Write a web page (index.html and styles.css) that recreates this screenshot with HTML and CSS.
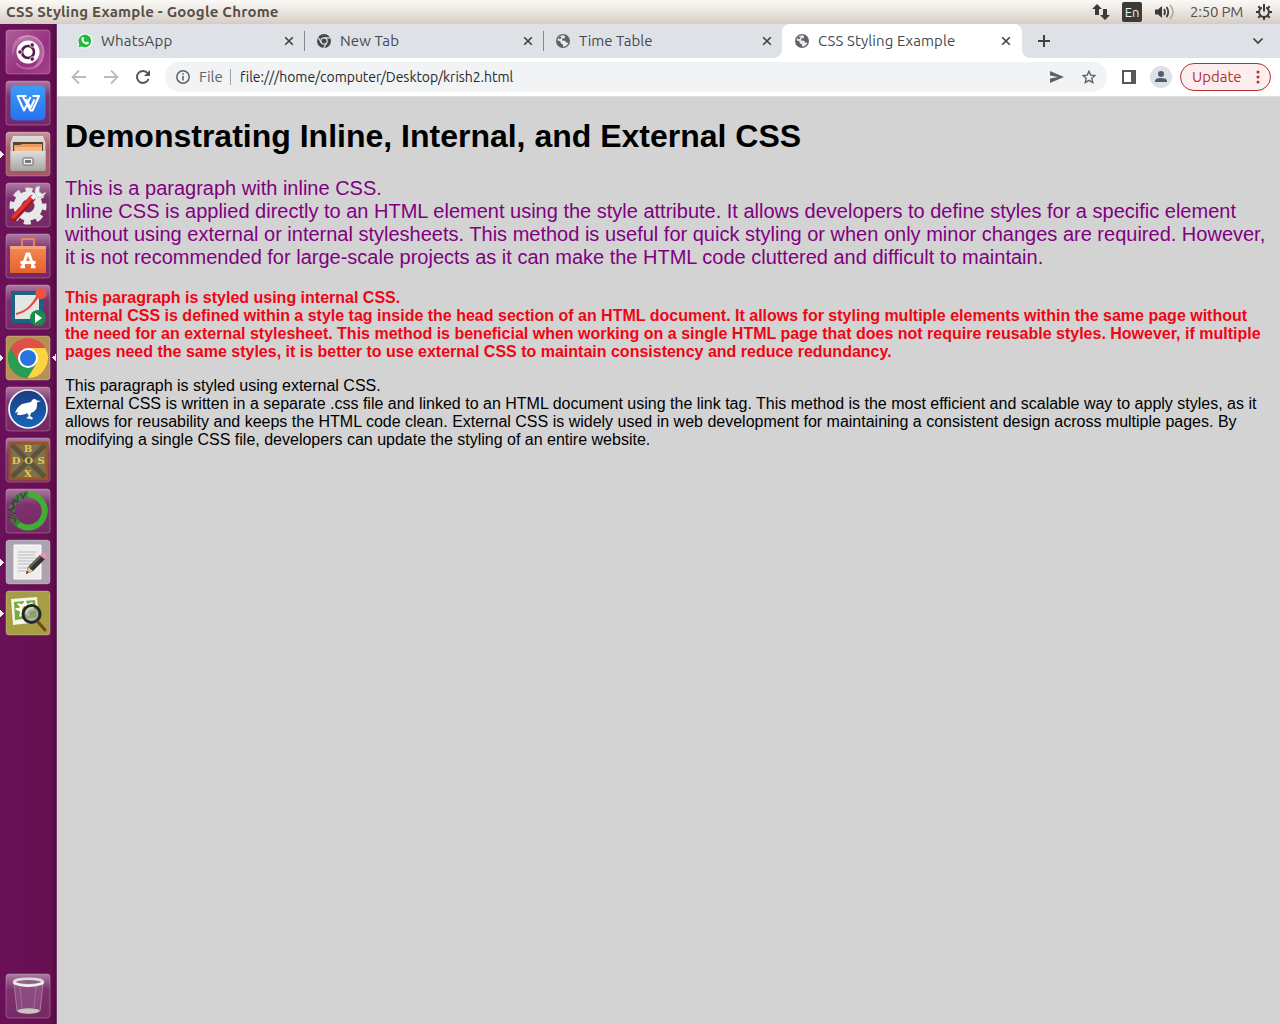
FILE: index.html
```html
<!DOCTYPE html>
<html lang="en">
<head>
<meta charset="utf-8">
<title>CSS Styling Example</title>
<link rel="stylesheet" href="styles.css">
</head>
<body>
<svg class="defs" width="0" height="0" aria-hidden="true">
  <defs>
    <linearGradient id="tile" x1="0" y1="0" x2="0" y2="1"><stop offset="0" stop-color="#fff" stop-opacity=".45"/><stop offset=".35" stop-color="#fff" stop-opacity=".14"/><stop offset="1" stop-color="#fff" stop-opacity=".1"/></linearGradient>
    <linearGradient id="ubuntu" x1="0" y1="0" x2="1" y2="1"><stop offset="0" stop-color="#ad6098"/><stop offset=".6" stop-color="#983080"/><stop offset="1" stop-color="#a7408e"/></linearGradient>
    <linearGradient id="blue" x1="0" y1="0" x2="0" y2="1"><stop offset="0" stop-color="#1c3c82"/><stop offset="1" stop-color="#1765bc"/></linearGradient>
    <linearGradient id="wps" x1="0" y1="0" x2="0" y2="1"><stop offset="0" stop-color="#3d9df5"/><stop offset="1" stop-color="#2671f0"/></linearGradient>
    <linearGradient id="metal" x1="0" y1="0" x2="0" y2="1"><stop offset="0" stop-color="#dedede"/><stop offset="1" stop-color="#a6a6a3"/></linearGradient>
    <linearGradient id="bag" x1="0" y1="0" x2="0" y2="1"><stop offset="0" stop-color="#f18a58"/><stop offset="1" stop-color="#e8622a"/></linearGradient>
    <symbol id="globe" viewBox="0 0 14 14"><circle cx="7" cy="7" r="7" fill="#5f6368"/><path d="M8 1.4 9.2 2.5 8.6 4.2 6.3 4.6 6 6.4 9.2 6.8 10.2 8.8 12.4 8.6A5.8 5.8 0 0 1 7 12.7L7 10.6 4.8 9.2 4.5 7.5 1.4 6.3A5.8 5.8 0 0 1 8 1.4Z" fill="#e9ebee"/><path d="M3.2 3.2 5.6 2.4 5 4.8 2.5 5.3Z" fill="#5f6368"/></symbol>
    <symbol id="close" viewBox="0 0 10 10"><path d="M1.2 1.2 8.8 8.8M8.8 1.2 1.2 8.8" stroke="#3c4043" stroke-width="1.6"/></symbol>
  </defs>
</svg>
<header class="panel">
  <span class="window-title">CSS Styling Example - Google Chrome</span>
  <svg class="net" width="18" height="16" viewBox="0 0 18 16" fill="#3c3b37"><path d="M5 0 10 5H7V11H3V5H0ZM13 16 8 11H11V5H15V11H18Z"/></svg>
  <span class="lang">En</span>
  <svg class="volume" width="20" height="16" viewBox="0 0 20 16" fill="none"><path d="M0 5.5H3L7 2V14L3 10.5H0Z" fill="#3c3b37"/><path d="M9 5Q11 8 9 11M11.500 3Q15 8 11.500 13" stroke="#3c3b37" stroke-width="1.8"/><path d="M15 1Q21 8 15 15" stroke="#b0aaa3" stroke-width="1.6"/></svg>
  <span class="clock">2:50 PM</span>
  <svg class="gear" width="16" height="16" viewBox="0 0 16 16" fill="none" stroke="#3c3b37"><path d="M5.8 3.6A5 5 0 1 0 10.2 3.6" stroke-width="2"/><path d="M8 0V7.5M0 8H3M13 8H16M8 13V16M2.3 2.3 4.3 4.3M13.7 2.3 11.7 4.3M2.3 13.7 4.3 11.7M13.7 13.7 11.7 11.7" stroke-width="2"/></svg>
</header>
<div class="desktop">
  <nav class="launcher">
    <svg class="app" viewBox="0 0 44 44"><rect class="base" width="44" height="44" rx="3" fill="url(#ubuntu)"/><path d="M7 26C3 10 16 1 29 7 42 13 40 33 28 38 35 29 34 15 23 11 13 9 8 17 7 26Z" fill="#fff" opacity=".22"/><path d="M13 9C26 0 41 12 37 27 34 40 17 42 10 33" fill="none" stroke="#fff" stroke-width="2" opacity=".25"/><circle cx="22" cy="22" r="11.500" fill="#fff"/><circle cx="22" cy="22" r="6" fill="none" stroke="#56194c" stroke-width="2.6"/><g fill="#56194c" stroke="#fff" stroke-width=".8"><circle cx="14" cy="22" r="2.2"/><circle cx="26.2" cy="15" r="2.2"/><circle cx="26.2" cy="29" r="2.2"/></g></svg>
    <svg class="app" viewBox="0 0 44 44"><rect class="base" width="44" height="44" rx="3" fill="url(#tile)"/><rect x="4.500" y="4.500" width="35" height="35" rx="5" fill="url(#wps)"/><path d="M20.500 15H11.500L18 29.500 24.500 16M16.500 15 24.500 29.500H26.500L33 15H26.500M20 18 24.500 27 28.500 18.500" fill="none" stroke="#fff" stroke-width="2" stroke-linejoin="round"/></svg>
    <svg class="app running" viewBox="0 0 44 44"><rect class="base" width="44" height="44" rx="3" fill="#9b4552"/><rect width="44" height="44" rx="3" fill="url(#tile)"/><path d="M7 4H37L39.500 11V37Q39.500 39 38 39H6Q4.500 39 4.500 37V11Z" fill="url(#metal)"/><path d="M7 10H37V19H7Z" fill="#574334"/><path d="M8 13H14L16 12H36V19H8Z" fill="#e99b60"/><path d="M9 15H36V19H9Z" fill="#f3ba83"/><path d="M4.500 19H39.500V37Q39.500 39 38 39H6Q4.500 39 4.500 37Z" fill="url(#metal)"/><rect x="17" y="26" width="10" height="7" rx="1" fill="#f2f2f2" stroke="#666"/><rect x="19" y="28" width="6" height="3" fill="#777"/></svg>
    <svg class="app" viewBox="0 0 44 44"><rect class="base" width="44" height="44" rx="3" fill="url(#tile)"/><circle cx="22" cy="23" r="16" fill="none" stroke="#e5e5e5" stroke-width="5" stroke-dasharray="7 5.566" stroke-dashoffset="3"/><circle cx="22" cy="23" r="10.500" fill="none" stroke="#e9e9e9" stroke-width="8"/><path d="M8 35 26 15.500" stroke="#a91418" stroke-width="6.500" stroke-linecap="round"/><path d="M7.500 34 25.500 14.500" stroke="#df3439" stroke-width="4" stroke-linecap="round"/><path d="M26 15.500 33 9" stroke="#efefef" stroke-width="4"/><path d="M30 4Q27 11 32 14 38 15 40 9L36 11 33 9 34 3Z" fill="#f2f2f2" stroke="#aaa" stroke-width=".6"/></svg>
    <svg class="app" viewBox="0 0 44 44"><rect class="base" width="44" height="44" rx="3" fill="url(#tile)"/><path d="M16 13V5H28V13" fill="none" stroke="#e98257" stroke-width="2"/><path d="M4 12H40V39H4Z" fill="url(#bag)"/><path d="M4 12H40V15H4Z" fill="#f6a37d"/><path d="M16.500 33 21 20H23L27.500 33M14.500 28.500H29.500" fill="none" stroke="#fff" stroke-width="3"/><path d="M14.500 33H19M25 33H29.500" stroke="#fff" stroke-width="2.5"/></svg>
    <svg class="app" viewBox="0 0 44 44"><rect class="base" width="44" height="44" rx="3" fill="url(#tile)"/><rect x="7" y="8" width="28" height="28" fill="#e0e7e4" stroke="#1e6284" stroke-width="4"/><path d="M10 30Q24 27 34 10L31 9Q24 25 10 28Z" fill="#e64837"/><circle cx="35" cy="8.500" r="5.500" fill="#f05240"/><circle cx="32" cy="33" r="8" fill="#198b4c"/><path d="M29 28 36 33 29 38Z" fill="#fff"/></svg>
    <svg class="app running active" viewBox="0 0 44 44"><rect class="base" width="44" height="44" rx="3" fill="#b69155"/><circle cx="22" cy="22" r="20" fill="#df5146"/><path d="M22 12H39.300A20 20 0 0 1 21 42L30.700 27Z" fill="#fcd342"/><path d="M4.700 12A20 20 0 0 0 21.500 42L30.700 27H22L13.300 27Z" fill="#279e54"/><circle cx="22" cy="22" r="10" fill="#fff"/><circle cx="22" cy="22" r="8" fill="#2675df"/></svg>
    <svg class="app" viewBox="0 0 44 44"><rect class="base" width="44" height="44" rx="3" fill="url(#tile)"/><circle cx="22" cy="22" r="19" fill="url(#blue)" stroke="#f3f5f7" stroke-width="1.7"/><path d="M35 14 31 13.500Q27 10 25 15L16 17Q11 20 9 26L12 25 11 28Q19 28 21 26L23 29 20 31 26 32.500 27 31 24 29 25 26Q31 24 31 18L31 15.500Z" fill="#fff"/></svg>
    <svg class="app" viewBox="0 0 44 44"><rect class="base" width="44" height="44" rx="3" fill="url(#tile)"/><rect x="4" y="5" width="37" height="36" fill="#80704d" stroke="#9a5524" stroke-width="3"/><path d="M6 7 39 39M39 7 6 39" stroke="#5d533e" stroke-width="5"/><g class="dos" fill="#e7c54b" text-anchor="middle"><text x="22" y="13.500">B</text><text x="10" y="26">D</text><text x="22.500" y="26">O</text><text x="35" y="26">S</text><text x="22" y="38.500">X</text></g></svg>
    <svg class="app" viewBox="0 0 44 44"><rect class="base" width="44" height="44" rx="3" fill="url(#tile)"/><path d="M22 5.500A16.500 16.500 0 1 1 12 35" fill="none" stroke="#42ad35" stroke-width="6"/><path d="M22 5.500A16.500 16.500 0 0 0 12 35" fill="none" stroke="#35823a" stroke-width="6.500"/><path d="M20 3 17 9M14 4 18 10M12 6 11 13 7 10M13 12 5 14 9 18 2 21 9 24 3 28 10 30 8 34M7 11 8 19 3 25 10 28" fill="none" stroke="#701b58" stroke-width="1.1"/></svg>
    <svg class="app running" viewBox="0 0 44 44"><rect class="base" width="44" height="44" rx="3" fill="#aca2b0"/><path d="M8 5H35V39H8Z" fill="#eee" stroke="#fff"/><path d="M12 12H31M12 15H29M12 18H31M12 21H28M12 24H30M12 28H24M12 31H26" stroke="#bbb" stroke-width="1"/><path d="M20 34 22 27 34 15 39 19 27 31Z" fill="#32342f"/><path d="M23 28 35 16" stroke="#70736a" stroke-width="1.5"/><path d="M34 15 37 12 41 16 38 19Z" fill="#ed91ac"/><path d="M20 34 22 27 27 31Z" fill="#e7c488"/><path d="M20 34 21 31 23 32Z" fill="#222"/></svg>
    <svg class="app running" viewBox="0 0 44 44"><rect class="base" width="44" height="44" rx="3" fill="#a69e45"/><path d="M5 8 31 6 33 31 7 34Z" fill="#f4f4e9"/><path d="M8 11 29 9 31 26 9 29Z" fill="#7ba839"/><path d="M10 18 16 17 12 13 17 14 19 10 21 14 26 12 23 17 28 19 22 20 23 25 19 22 14 25 15 20Z" fill="#fff" stroke="#fff" stroke-width="1.5" stroke-linejoin="round"/><circle cx="19" cy="18" r="3" fill="#e1bd35"/><circle cx="25.500" cy="23" r="8.500" fill="#929e82" fill-opacity=".75" stroke="#222822" stroke-width="3"/><path d="M20 22Q22 16 28 17" fill="none" stroke="#d9ddd0" stroke-width="1.5"/><path d="M32 31 39 39" stroke="#74451c" stroke-width="3" stroke-linecap="round"/></svg>
    <svg class="app trash" viewBox="0 0 44 44"><rect class="base" width="44" height="44" rx="3" fill="url(#tile)"/><path d="M8 9 11 37Q22 41 34 37L37 9" fill="#a16b9a" fill-opacity=".45" stroke="#a87aa3"/><path d="M14 12 16 34M30 12 28 34" stroke="#b891b4" stroke-width=".5"/><ellipse cx="22.500" cy="8" rx="14.500" ry="3.200" fill="#8e6387" stroke="#deded9" stroke-width="2.5"/><path d="M8 9Q22 15 37 9" fill="none" stroke="#f3f3ed" stroke-width="2"/><ellipse cx="22.500" cy="37" rx="11" ry="2.700" fill="#c7c6bd"/></svg>
  </nav>
  <main class="browser">
    <div class="tabs">
      <div class="tab"><svg class="favicon chat" viewBox="0 0 16 16"><path d="M.5 15.500 1.500 11.500A7.400 7.400 0 1 1 4.500 14.500Z" fill="#fff"/><path d="M1.500 14.500 2.300 11.200A6.400 6.400 0 1 1 4.800 13.600Z" fill="#25b941"/><path d="M5 4.200 6.400 4 7.200 6 6.400 7Q7.300 8.800 9 9.500L10 8.500 12 9.600Q11.500 12 9 11.500 4.800 10 4.400 6Z" fill="#fff"/></svg><span class="label whatsapp">WhatsApp</span><svg class="close"><use href="#close"/></svg></div>
      <div class="tab"><svg class="favicon" viewBox="0 0 14 14"><circle cx="7" cy="7" r="7" fill="#45494d"/><circle cx="7" cy="7" r="3.200" fill="none" stroke="#dee1e6" stroke-width="1.2"/><path d="M7 3.800H13.200M4.200 8.600 1.100 3.500M9.800 8.600 6.700 13.900" stroke="#dee1e6" stroke-width="1.2"/></svg><span class="label newtab">New Tab</span><svg class="close"><use href="#close"/></svg></div>
      <div class="tab"><svg class="favicon"><use href="#globe"/></svg><span class="label">Time Table</span><svg class="close"><use href="#close"/></svg></div>
      <div class="tab selected"><svg class="favicon"><use href="#globe"/></svg><span class="label example">CSS Styling Example</span><svg class="close"><use href="#close"/></svg></div>
      <svg class="new" width="14" height="14" viewBox="0 0 14 14"><path d="M7 1V13M1 7H13" stroke="#3c4043" stroke-width="2"/></svg>
      <svg class="chevron" width="12" height="10" viewBox="0 0 12 10"><path d="M1.500 2.500 6 7 10.500 2.500" fill="none" stroke="#3c4043" stroke-width="1.7"/></svg>
    </div>
    <div class="toolbar">
      <svg class="back" width="16" height="16" viewBox="0 0 16 16"><path d="M15 8H2M8 1.500 1.500 8 8 14.500" fill="none" stroke="#b8babd" stroke-width="1.8"/></svg>
      <svg class="forward" width="16" height="16" viewBox="0 0 16 16"><path d="M1 8H14M8 1.500 14.500 8 8 14.500" fill="none" stroke="#b8babd" stroke-width="1.8"/></svg>
      <svg class="reload" width="16" height="16" viewBox="0 0 16 16"><path d="M13.600 10A6 6 0 1 1 12.700 4.200" fill="none" stroke="#54575b" stroke-width="2"/><path d="M15 1V7H9Z" fill="#54575b"/></svg>
      <div class="address">
        <svg width="14" height="14" viewBox="0 0 14 14"><circle cx="7" cy="7" r="6.200" fill="none" stroke="#5f6368" stroke-width="1.5"/><path d="M7 6V10.500M7 3.200V4.800" stroke="#5f6368" stroke-width="1.6"/></svg>
        <span class="scheme">File</span><span class="url">file:///home/computer/Desktop/krish2.html</span>
        <svg class="send" width="14" height="12" viewBox="0 0 14 12"><path d="M0 0 14 6 0 12V7.500L8 6 0 4.500Z" fill="#5f6368"/></svg>
        <svg class="star" width="14" height="14" viewBox="0 0 14 14"><path d="M7 1.200 8.700 5.100 13 5.500 9.800 8.300 10.700 12.500 7 10.300 3.300 12.500 4.200 8.300 1 5.500 5.300 5.100Z" fill="none" stroke="#5f6368" stroke-width="1.4"/></svg>
      </div>
      <svg class="side" width="14" height="14" viewBox="0 0 14 14"><path d="M0 0H14V14H0ZM2 2V12H9V2Z" fill="#55585d" fill-rule="evenodd"/></svg>
      <svg class="profile" width="22" height="22" viewBox="0 0 22 22"><circle cx="11" cy="11" r="11" fill="#dce0e7"/><circle cx="11" cy="8" r="3" fill="#505b70"/><path d="M5 16V15Q5 12 11 12T17 15V16Z" fill="#505b70"/></svg>
      <div class="update"><span>Update</span><svg width="4" height="14" viewBox="0 0 4 14" fill="#b3302e"><circle cx="2" cy="2" r="1.500"/><circle cx="2" cy="7" r="1.500"/><circle cx="2" cy="12" r="1.500"/></svg></div>
    </div>
    <article class="page">
      <h1>Demonstrating Inline, Internal, and External CSS</h1>
      <p class="inline-copy">This is a paragraph with inline CSS.<br>Inline CSS is applied directly to an HTML element using the style attribute. It allows developers to define styles for a specific element without using external or internal stylesheets. This method is useful for quick styling or when only minor changes are required. However, it is not recommended for large-scale projects as it can make the HTML code cluttered and difficult to maintain.</p>
      <p class="internal-copy">This paragraph is styled using internal CSS.<br>Internal CSS is defined within a style tag inside the head section of an HTML document. It allows for styling multiple elements within the same page without the need for an external stylesheet. This method is beneficial when working on a single HTML page that does not require reusable styles. However, if multiple pages need the same styles, it is better to use external CSS to maintain consistency and reduce redundancy.</p>
      <p>This paragraph is styled using external CSS.<br>External CSS is written in a separate .css file and linked to an HTML document using the link tag. This method is the most efficient and scalable way to apply styles, as it allows for reusability and keeps the HTML code clean. External CSS is widely used in web development for maintaining a consistent design across multiple pages. By modifying a single CSS file, developers can update the styling of an entire website.</p>
    </article>
  </main>
</div>
</body>
</html>
```
FILE: styles.css
```css
* { box-sizing: border-box; }
body { margin: 0; width: 1280px; height: 1024px; overflow: hidden; display: flex; flex-direction: column; font-family: Ubuntu, "Noto Sans", sans-serif; }
svg { display: block; flex: none; }
.defs { position: absolute; }
.panel { height: 24px; flex: none; display: flex; align-items: center; padding: 0 8px 0 6px; background: linear-gradient(#faf9f6, #f2eeea 30%, #d6ccc4); color: #55504a; white-space: nowrap; }
.window-title { font-size: 15px; line-height: 16px; padding-bottom: 1px; font-weight: 700; margin-right: auto; letter-spacing: .23px; }
.net { margin-right: 12px; }
.lang { width: 20px; height: 20px; border-radius: 2px; background: #3c3b37; color: #eee; font-size: 13px; line-height: 20px; text-align: center; margin-right: 13px; }
.volume { margin-right: 15px; }
.clock { font-size: 15px; line-height: 16px; padding-bottom: 1px; letter-spacing: -.2px; width: 53px; margin-right: 13px; }
.desktop { display: flex; flex: 1; min-height: 0; }
.launcher { width: 57px; flex: none; display: flex; flex-direction: column; gap: 7px; padding: 6px 0 6px 6px; background: linear-gradient(90deg, #6a1059, #661052 90%, #530b43); border-right: 1px solid #753668; }
.app { width: 44px; height: 44px; overflow: visible; }
.app .base { stroke: #fff; stroke-opacity: .25; stroke-width: 1; }
.trash { margin-top: auto; }
.running { margin-left: -6px; width: 50px; padding-left: 6px; background: conic-gradient(from 225deg at 4px 50%, #eee 90deg, transparent 0) 0 50% / 4px 8px no-repeat; }
.active { width: 56px; padding-right: 6px; background: conic-gradient(from 225deg at 4px 50%, #eee 90deg, transparent 0) 0 50% / 4px 8px no-repeat, conic-gradient(from 45deg at 0 50%, #eee 90deg, transparent 0) 100% 50% / 4px 8px no-repeat; }
.dos { font: 700 10px "DejaVu Serif", serif; }
.browser { flex: 1; min-width: 0; display: flex; flex-direction: column; background: #fff; }
.tabs { height: 34px; flex: none; display: flex; align-items: center; background: #dee1e6; padding-left: 9px; }
.tab { width: 239px; height: 34px; display: flex; align-items: center; padding: 0 11px 0 12px; position: relative; color: #45494d; }
.tab:nth-child(-n+2)::after { content: ""; position: absolute; right: 0; top: 7px; width: 1px; height: 20px; background: #85888d; }
.favicon { width: 14px; height: 14px; margin-right: 9px; }
.chat { width: 16px; height: 16px; margin: 0 8px 0 -1px; }
.label { font-size: 15px; line-height: 20px; white-space: nowrap; }
.whatsapp { letter-spacing: .2px; }
.newtab, .example { letter-spacing: .1px; }
.close { width: 10px; height: 10px; margin-left: auto; }
.selected { width: 240px; margin-left: -1px; padding-left: 13px; background: #fff; border-radius: 8px 8px 0 0; }
.selected::before, .selected::after { content: ""; position: absolute; bottom: 0; width: 8px; height: 8px; }
.selected::before { left: -8px; background: radial-gradient(circle at 0 0, transparent 7.5px, #fff 8px); }
.selected::after { right: -8px; background: radial-gradient(circle at 100% 0, transparent 7.5px, #fff 8px); }
.new { margin-left: 15px; }
.chevron { margin: 0 16px 0 auto; }
.toolbar { height: 39px; flex: none; border-bottom: 1px solid #e0e0e0; display: flex; align-items: center; padding-left: 14px; }
.forward { margin-left: 16px; }
.reload { margin-left: 16px; }
.address { width: 942px; height: 30px; border-radius: 15px; background: #f1f3f4; display: flex; align-items: center; margin-left: 14px; padding: 0 11px; font-size: 14px; white-space: nowrap; }
.scheme { width: 32px; height: 16px; line-height: 16px; font-size: 15px; margin-left: 9px; padding-right: 8px; color: #5f6368; border-right: 1px solid #9da1a5; }
.url { margin-left: 9px; color: #26282b; letter-spacing: -.04px; }
.send { margin-left: auto; margin-right: 18px; }
.side { margin-left: 15px; }
.profile { margin-left: 14px; }
.update { width: 91px; height: 28px; margin-left: 8px; border: 1px solid #b3302e; border-radius: 14px; background: #fceeee; color: #b3302e; display: flex; align-items: center; padding: 0 10px 0 11px; font-size: 15px; }
.update span { line-height: 16px; padding-bottom: 1px; }
.update svg { margin-left: auto; }
.page { flex: 1; padding: 0 8px; background: #d3d3d3; font-family: "Liberation Sans", Arial, sans-serif; font-size: 16px; color: #000; }
h1 { font-size: 32px; margin: 21.44px 0; }
p { margin: 16px 0; }
.inline-copy { font-size: 20px; margin: 20px 0; color: #800080; }
.internal-copy { font-weight: 700; color: #f00514; }
```
